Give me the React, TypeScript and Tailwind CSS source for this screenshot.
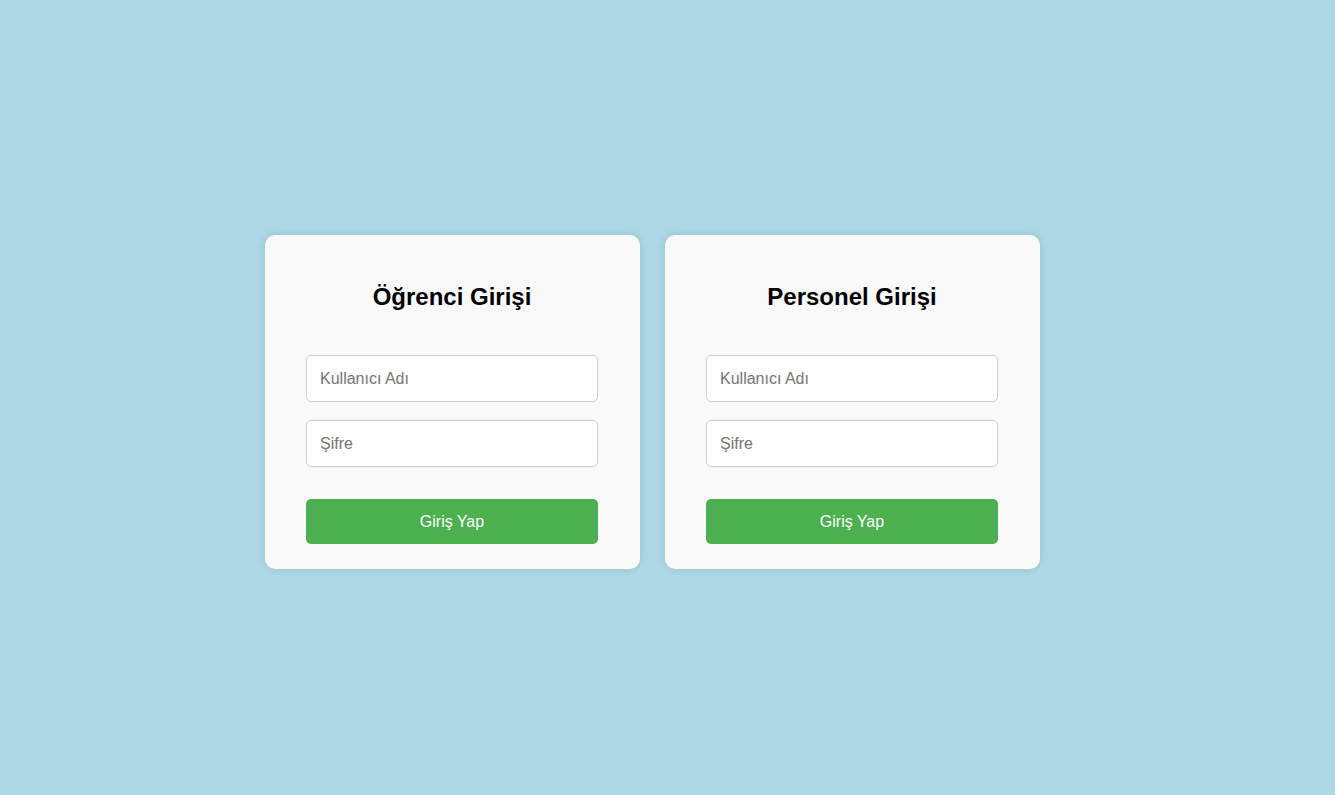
import React from "react";

function LoginCard({ title }: { title: string }) {
  return (
    <div className="w-[375px] h-[334px] bg-[#f9f9f9] rounded-[10px] shadow-[0_0_10px_rgba(0,0,0,0.12)] pl-[41px] pr-[42px] pt-[48px] flex flex-col items-start">
      <h2 className="self-stretch text-[24px] leading-[28px] font-bold text-black text-center">{title}</h2>
      <input
        type="text"
        placeholder="Kullanıcı Adı"
        className="mt-[44px] w-[292px] h-[47px] px-[13px] text-[16px] bg-white border border-[#cccccc] rounded-[5px] placeholder:text-[#757575] outline-none"
      />
      <input
        type="password"
        placeholder="Şifre"
        className="mt-[18px] w-[292px] h-[47px] px-[13px] text-[16px] bg-white border border-[#cccccc] rounded-[5px] placeholder:text-[#757575] outline-none"
      />
      <button className="mt-[32px] w-[292px] h-[45px] bg-[#4CAF50] text-white text-[16px] rounded-[5px]">
        Giriş Yap
      </button>
    </div>
  );
}

export default function App() {
  return (
    <div
      className="w-full h-[795px] bg-[#ADD8E6] flex items-center justify-center gap-[25px] pr-[30px] pt-[9px]"
      style={{ fontFamily: '"Liberation Sans", Arial, sans-serif' }}
    >
      <LoginCard title="Öğrenci Girişi" />
      <LoginCard title="Personel Girişi" />
    </div>
  );
}
